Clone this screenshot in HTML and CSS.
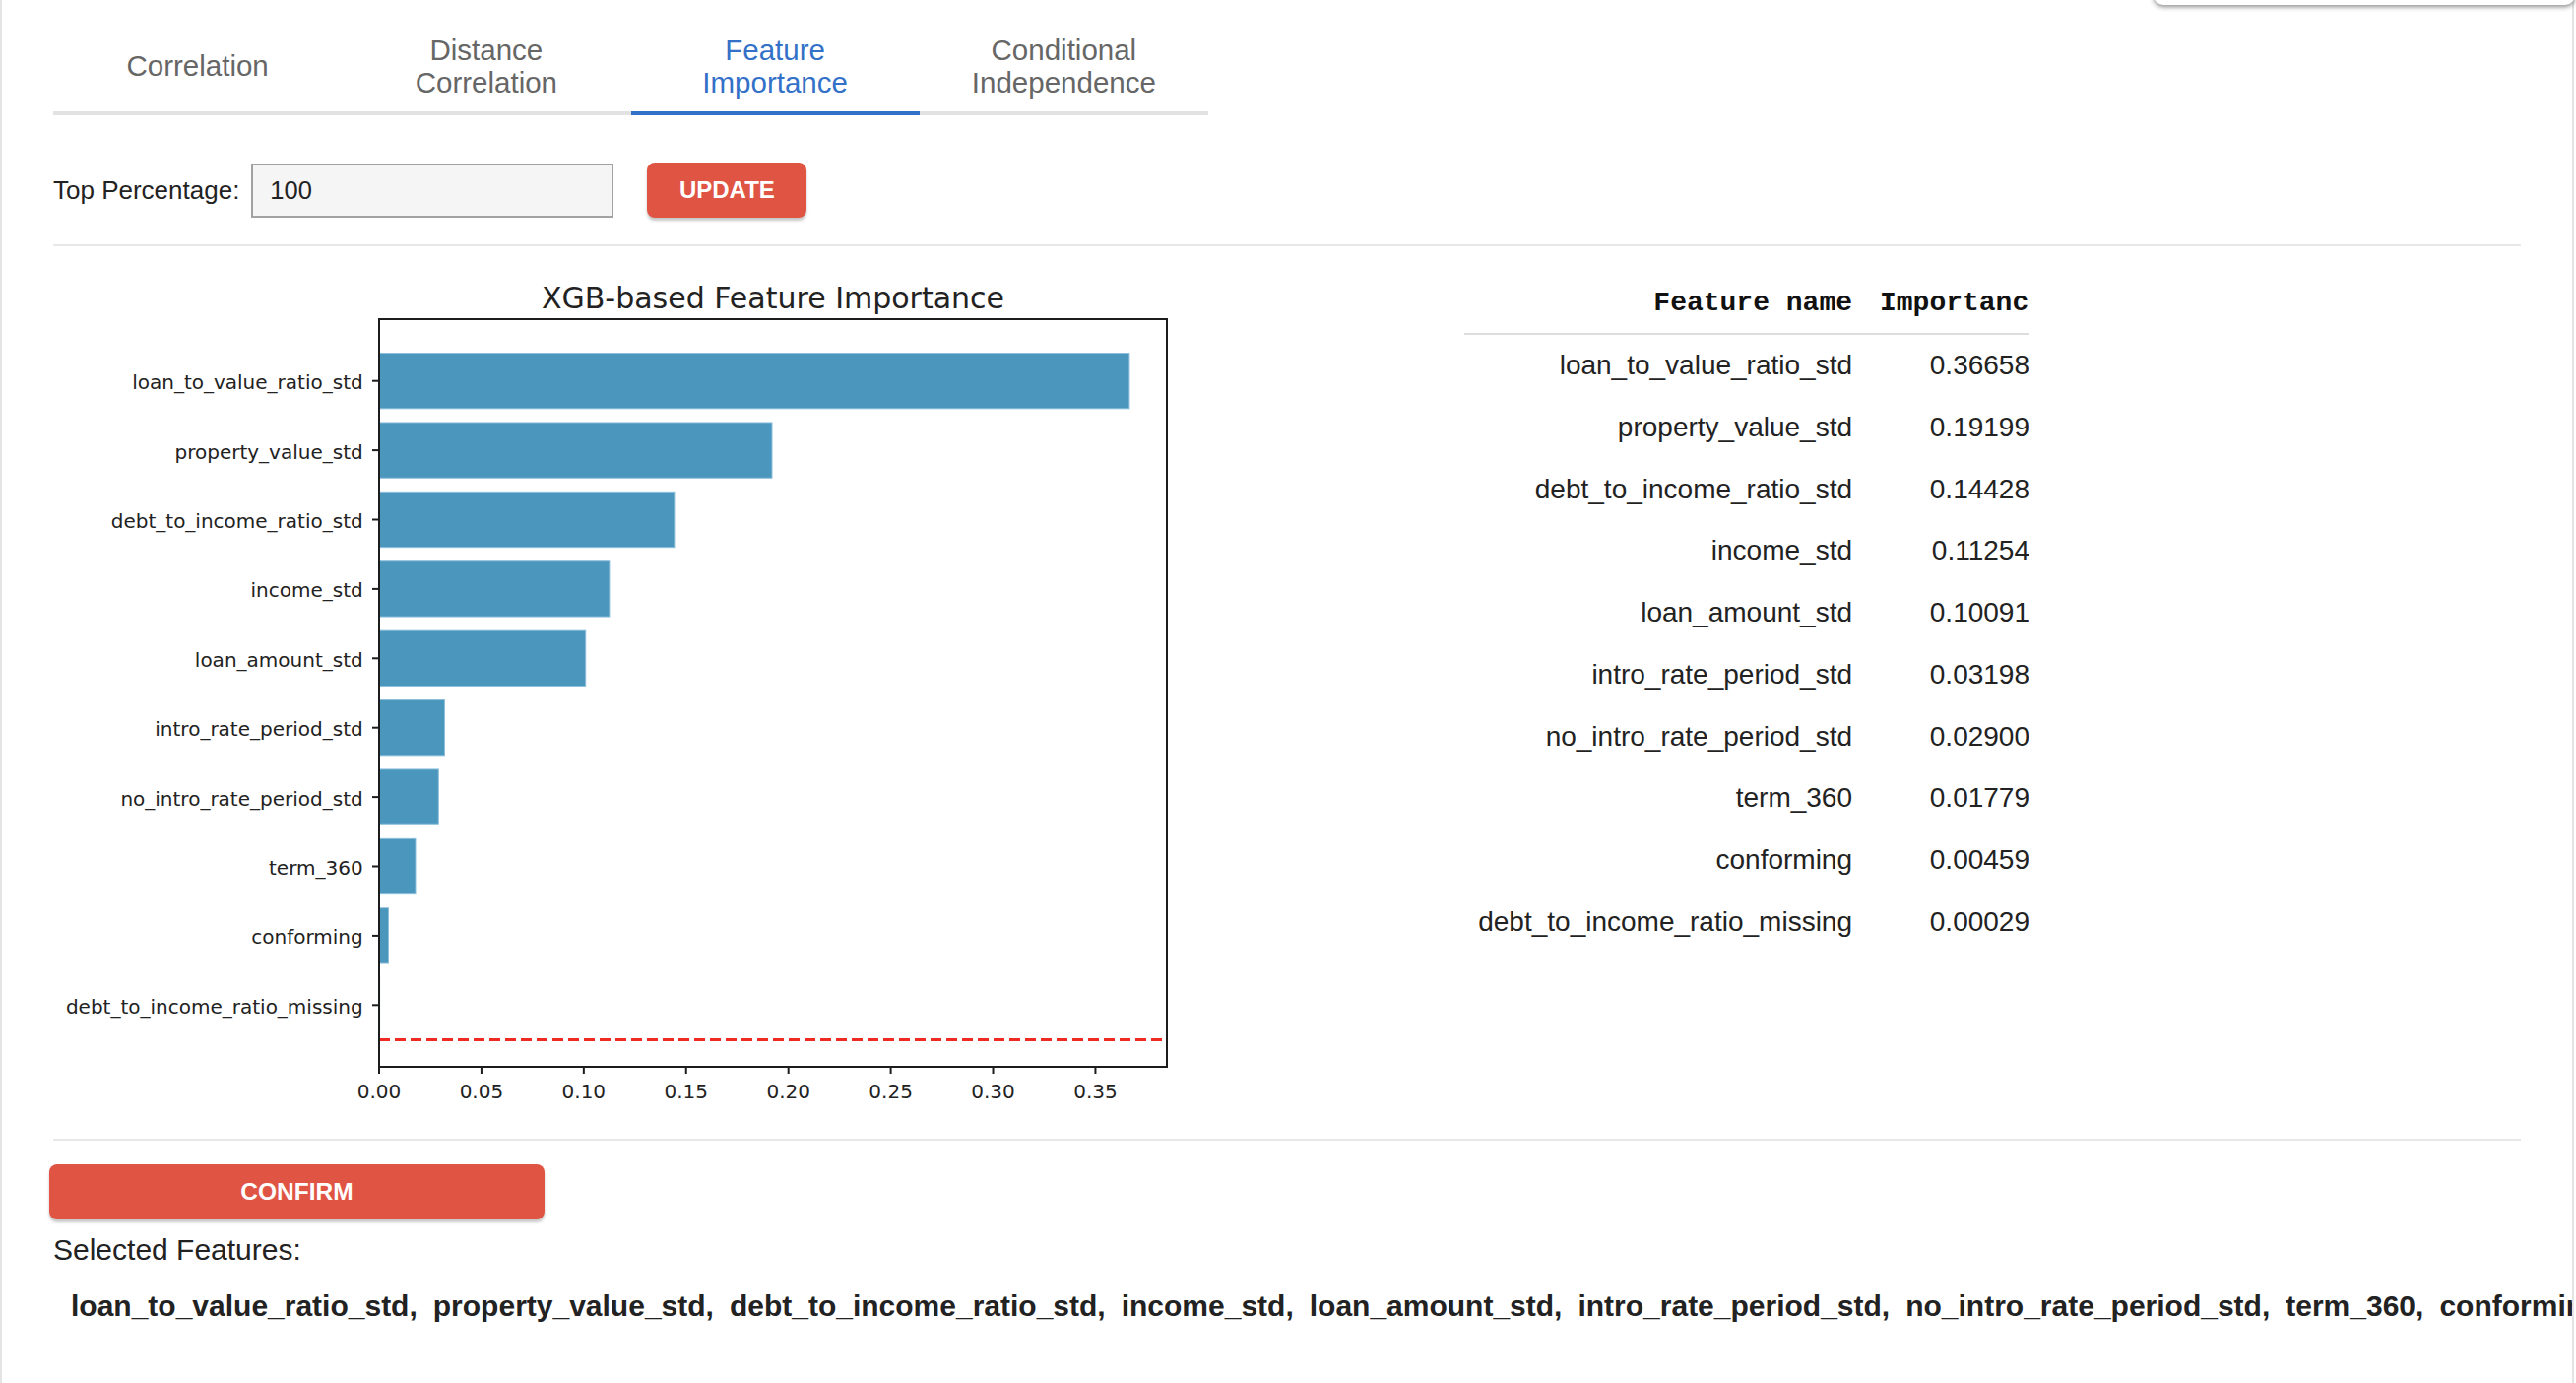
FILE: index.html
```html
<!DOCTYPE html>
<html lang="en">
<head>
<meta charset="utf-8">
<title>Feature Importance</title>
<link rel="stylesheet" href="styles.css">
</head>
<body>
<div class="page">
  <div class="tabs">
    <div class="tab">Correlation</div>
    <div class="tab">Distance Correlation</div>
    <div class="tab active">Feature Importance</div>
    <div class="tab">Conditional Independence</div>
  </div>

  <div class="controls">
    <label class="ctl-label" for="pct">Top Percentage:</label>
    <input id="pct" class="ctl-input" type="text" value="100">
    <button class="btn btn-update">UPDATE</button>
  </div>

  <div class="divider"></div>

  <div class="main">
    <svg class="chart" width="1160" height="882" viewBox="0 0 1160 882" xmlns="http://www.w3.org/2000/svg">
      <text class="title" x="731" y="50.7" text-anchor="middle">XGB-based Feature Importance</text>
      <g class="bars">
        <rect x="331" y="96.55" width="761.9" height="56.3"/>
        <rect x="331" y="166.95" width="399.0" height="56.3"/>
        <rect x="331" y="237.35" width="299.9" height="56.3"/>
        <rect x="331" y="307.75" width="233.9" height="56.3"/>
        <rect x="331" y="378.15" width="209.7" height="56.3"/>
        <rect x="331" y="448.55" width="66.5" height="56.3"/>
        <rect x="331" y="518.95" width="60.3" height="56.3"/>
        <rect x="331" y="589.35" width="37.0" height="56.3"/>
        <rect x="331" y="659.75" width="9.5" height="56.3"/>
        <rect x="331" y="730.15" width="0.6" height="56.3"/>
      </g>
      <line class="thresh" x1="331" y1="793.5" x2="1131" y2="793.5"/>
      <g class="ticks">
        <line x1="324" y1="124.7" x2="331" y2="124.7"/>
        <line x1="324" y1="195.1" x2="331" y2="195.1"/>
        <line x1="324" y1="265.5" x2="331" y2="265.5"/>
        <line x1="324" y1="335.9" x2="331" y2="335.9"/>
        <line x1="324" y1="406.3" x2="331" y2="406.3"/>
        <line x1="324" y1="476.7" x2="331" y2="476.7"/>
        <line x1="324" y1="547.1" x2="331" y2="547.1"/>
        <line x1="324" y1="617.5" x2="331" y2="617.5"/>
        <line x1="324" y1="687.9" x2="331" y2="687.9"/>
        <line x1="324" y1="758.3" x2="331" y2="758.3"/>
        <line x1="331" y1="821" x2="331" y2="828"/>
        <line x1="434.92" y1="821" x2="434.92" y2="828"/>
        <line x1="538.84" y1="821" x2="538.84" y2="828"/>
        <line x1="642.76" y1="821" x2="642.76" y2="828"/>
        <line x1="746.68" y1="821" x2="746.68" y2="828"/>
        <line x1="850.6" y1="821" x2="850.6" y2="828"/>
        <line x1="954.52" y1="821" x2="954.52" y2="828"/>
        <line x1="1058.44" y1="821" x2="1058.44" y2="828"/>
      </g>
      <rect class="frame" x="331" y="62" width="800" height="759"/>
      <g class="ylabels" text-anchor="end">
        <text x="314.7" y="133.2">loan_to_value_ratio_std</text>
        <text x="314.7" y="203.6">property_value_std</text>
        <text x="314.7" y="274">debt_to_income_ratio_std</text>
        <text x="314.7" y="344.4">income_std</text>
        <text x="314.7" y="414.8">loan_amount_std</text>
        <text x="314.7" y="485.2">intro_rate_period_std</text>
        <text x="314.7" y="555.6">no_intro_rate_period_std</text>
        <text x="314.7" y="626">term_360</text>
        <text x="314.7" y="696.4">conforming</text>
        <text x="314.7" y="766.8">debt_to_income_ratio_missing</text>
      </g>
      <g class="xlabels" text-anchor="middle">
        <text x="331" y="853.3">0.00</text>
        <text x="434.92" y="853.3">0.05</text>
        <text x="538.84" y="853.3">0.10</text>
        <text x="642.76" y="853.3">0.15</text>
        <text x="746.68" y="853.3">0.20</text>
        <text x="850.6" y="853.3">0.25</text>
        <text x="954.52" y="853.3">0.30</text>
        <text x="1058.44" y="853.3">0.35</text>
      </g>
    </svg>

    <div class="table-wrap">
      <table class="imp-table">
        <colgroup><col class="c-name"><col class="c-val"></colgroup>
        <thead>
          <tr><th class="th-name">Feature name</th><th class="th-val">Importance</th></tr>
        </thead>
        <tbody>
          <tr><td>loan_to_value_ratio_std</td><td class="val">0.36658</td></tr>
          <tr><td>property_value_std</td><td class="val">0.19199</td></tr>
          <tr><td>debt_to_income_ratio_std</td><td class="val">0.14428</td></tr>
          <tr><td>income_std</td><td class="val">0.11254</td></tr>
          <tr><td>loan_amount_std</td><td class="val">0.10091</td></tr>
          <tr><td>intro_rate_period_std</td><td class="val">0.03198</td></tr>
          <tr><td>no_intro_rate_period_std</td><td class="val">0.02900</td></tr>
          <tr><td>term_360</td><td class="val">0.01779</td></tr>
          <tr><td>conforming</td><td class="val">0.00459</td></tr>
          <tr><td>debt_to_income_ratio_missing</td><td class="val">0.00029</td></tr>
        </tbody>
      </table>
    </div>
  </div>

  <div class="divider divider-bottom"></div>

  <button class="btn btn-confirm">CONFIRM</button>

  <div class="sel-label">Selected Features:</div>
  <div class="sel-list">
    <span>loan_to_value_ratio_std,</span>
    <span>property_value_std,</span>
    <span>debt_to_income_ratio_std,</span>
    <span>income_std,</span>
    <span>loan_amount_std,</span>
    <span>intro_rate_period_std,</span>
    <span>no_intro_rate_period_std,</span>
    <span>term_360,</span>
    <span>conforming,</span>
    <span>debt_to_income_ratio_missing</span>
  </div>
</div>
<div class="popover"></div>
</body>
</html>
```

FILE: styles.css
```css
* { box-sizing: border-box; }

html, body {
  margin: 0;
  padding: 0;
  background: #ffffff;
}

body {
  position: relative;
  width: 2616px;
  height: 1404px;
  overflow: hidden;
  font-family: "Liberation Sans", Arial, Helvetica, sans-serif;
  color: #222222;
}

.page {
  width: 2614px;
  height: 1404px;
  border-left: 2px solid #e4e4e4;
  border-right: 2px solid #e4e4e4;
  padding: 21px 52px 0 52px;
  overflow: hidden;
}

/* ---------- tabs ---------- */
.tabs {
  display: flex;
  width: 1173px;
}

.tab {
  width: 293.25px;
  height: 96px;
  padding: 0 32px;
  display: flex;
  align-items: center;
  justify-content: center;
  text-align: center;
  font-size: 29.5px;
  line-height: 33.3px;
  color: #666666;
  border-bottom: 4px solid #e2e2e2;
}

.tab.active {
  color: #3371c8;
  border-bottom-color: #3371c8;
}

/* ---------- controls ---------- */
.controls {
  display: flex;
  align-items: center;
  height: 56px;
  margin-top: 48px;
}

.ctl-label {
  font-size: 26px;
  color: #222222;
  margin-right: 12px;
}

.ctl-input {
  width: 368px;
  height: 55px;
  border: 2px solid #a2a2a2;
  background: #f5f5f5;
  font-family: "Liberation Sans", Arial, Helvetica, sans-serif;
  font-size: 25.5px;
  color: #222222;
  padding: 0 0 0 17px;
  outline: none;
  border-radius: 0;
}

.btn {
  border: none;
  background: #e05443;
  color: #ffffff;
  font-family: "Liberation Sans", Arial, Helvetica, sans-serif;
  font-weight: bold;
  font-size: 24px;
  border-radius: 8px;
  box-shadow: 0 3px 3px rgba(0, 0, 0, 0.22);
  padding: 0;
  cursor: pointer;
}

.btn-update {
  width: 162px;
  height: 56px;
  margin-left: 34px;
}

.divider {
  height: 2px;
  background: #e8e8e8;
  margin-top: 27px;
}

/* ---------- main: chart + table ---------- */
.main {
  display: flex;
  align-items: flex-start;
  margin-top: 12px;
}

.chart {
  display: block;
  flex: none;
}

.chart text {
  font-family: "DejaVu Sans", Verdana, sans-serif;
  fill: #222222;
}

.chart .title {
  font-size: 30px;
}

.chart .ylabels text,
.chart .xlabels text {
  font-size: 20px;
}

.chart .bars rect {
  fill: #4b96bd;
  stroke: #8cbfdb;
  stroke-width: 1;
}

.chart .frame {
  fill: none;
  stroke: #1c1c1c;
  stroke-width: 2;
}

.chart .ticks line {
  stroke: #1c1c1c;
  stroke-width: 2;
}

.chart .thresh {
  stroke: #ee2a22;
  stroke-width: 3;
  stroke-dasharray: 11 5;
}

.table-wrap {
  width: 574px;
  margin-left: 273px;
  margin-top: 13.6px;
  overflow: hidden;
  flex: none;
}

.imp-table {
  width: 574px;
  table-layout: fixed;
  border-collapse: collapse;
}

.c-name { width: 408px; }
.c-val { width: 166px; }

.imp-table th {
  font-family: "Courier New", "Liberation Mono", monospace;
  font-weight: bold;
  font-size: 28px;
  line-height: 32px;
  color: #111111;
  padding: 16.5px 14px 13.5px 14px;
  border-bottom: 2px solid #dddddd;
  white-space: nowrap;
  overflow: hidden;
}

.imp-table .th-name { text-align: right; }
.imp-table .th-val { text-align: left; padding-right: 0; }

.imp-table td {
  font-size: 28px;
  line-height: 32px;
  color: #222222;
  padding: 15.4px 14px;
  text-align: right;
  white-space: nowrap;
}

.imp-table td.val {
  padding-right: 0;
}

/* ---------- bottom ---------- */
.divider-bottom {
  margin-top: 12px;
}

.btn-confirm {
  display: block;
  width: 503px;
  height: 56px;
  margin-top: 24px;
  margin-left: -4px;
  font-size: 24.5px;
}

.sel-label {
  margin-top: 14px;
  font-size: 30px;
  line-height: 34px;
  color: #222222;
}

.sel-list {
  display: flex;
  gap: 16px;
  margin-top: 23px;
  padding-left: 18px;
  font-size: 30px;
  line-height: 34px;
  font-weight: bold;
  color: #222222;
  white-space: nowrap;
}

.sel-list span { flex: none; }

/* top-right floating panel (partially off-screen) */
.popover {
  position: absolute;
  left: 2187px;
  top: -30px;
  width: 428px;
  height: 35px;
  background: #ffffff;
  border-radius: 10px;
  box-shadow: 0 2px 5px rgba(0, 0, 0, 0.45);
}
```
